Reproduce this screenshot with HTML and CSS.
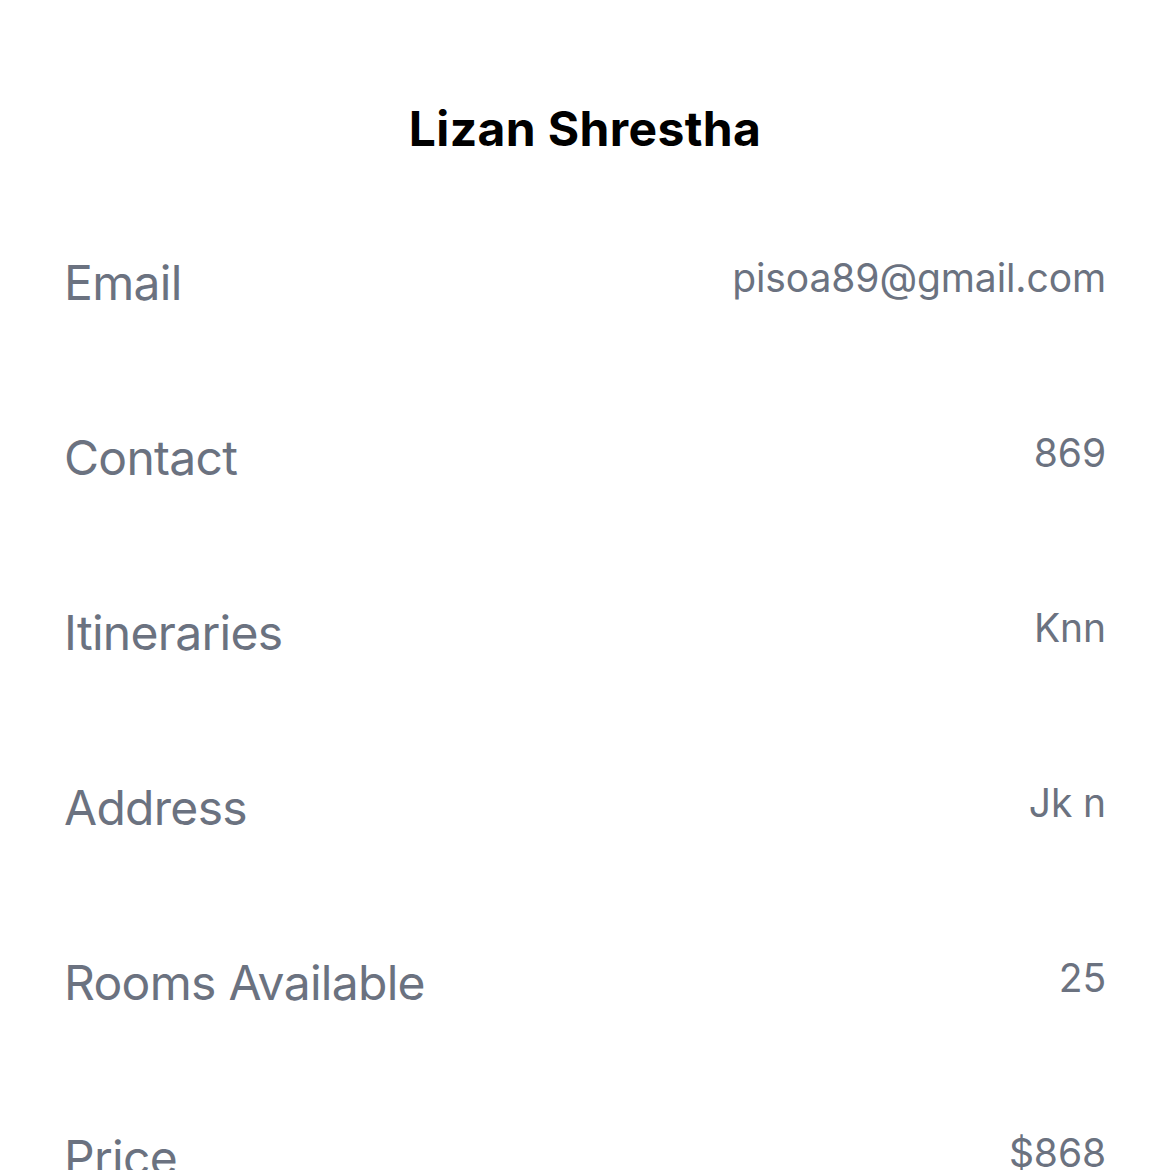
FILE: index.html
```html
<!DOCTYPE html>
<html>
<head>
<meta charset="utf-8">
<link rel="stylesheet" href="styles.css">
</head>
<body>
<div class="screen">
  <h1 class="title">Lizan Shrestha</h1>
  <div class="list">
    <div class="row"><span class="label">Email</span><span class="value">pisoa89@gmail.com</span></div>
    <div class="row"><span class="label">Contact</span><span class="value">869</span></div>
    <div class="row"><span class="label">Itineraries</span><span class="value">Knn</span></div>
    <div class="row"><span class="label">Address</span><span class="value">Jk n</span></div>
    <div class="row"><span class="label">Rooms Available</span><span class="value">25</span></div>
    <div class="row"><span class="label">Price</span><span class="value">$868</span></div>
  </div>
</div>
</body>
</html>
```
FILE: styles.css
```css
html, body {
  margin: 0;
  padding: 0;
  background: #ffffff;
}
body {
  font-family: Inter, "Noto Sans", sans-serif;
  width: 1170px;
  height: 1170px;
  overflow: hidden;
}
.screen {
  padding: 100px 64px 0 64px;
}
.title {
  margin: 0;
  text-align: center;
  font-size: 48px;
  font-weight: 700;
  letter-spacing: 0.35px;
  color: #000;
  line-height: 58px;
}
.list {
  margin-top: 96px;
  display: flex;
  flex-direction: column;
  gap: 117px;
}
.row {
  display: flex;
  justify-content: space-between;
  align-items: flex-start;
}
.label {
  font-size: 48px;
  line-height: 58px;
  letter-spacing: -0.7px;
  color: #6b7280;
}
.value {
  font-size: 39px;
  line-height: 47px;
  letter-spacing: -0.1px;
  color: #6b7280;
}
```
